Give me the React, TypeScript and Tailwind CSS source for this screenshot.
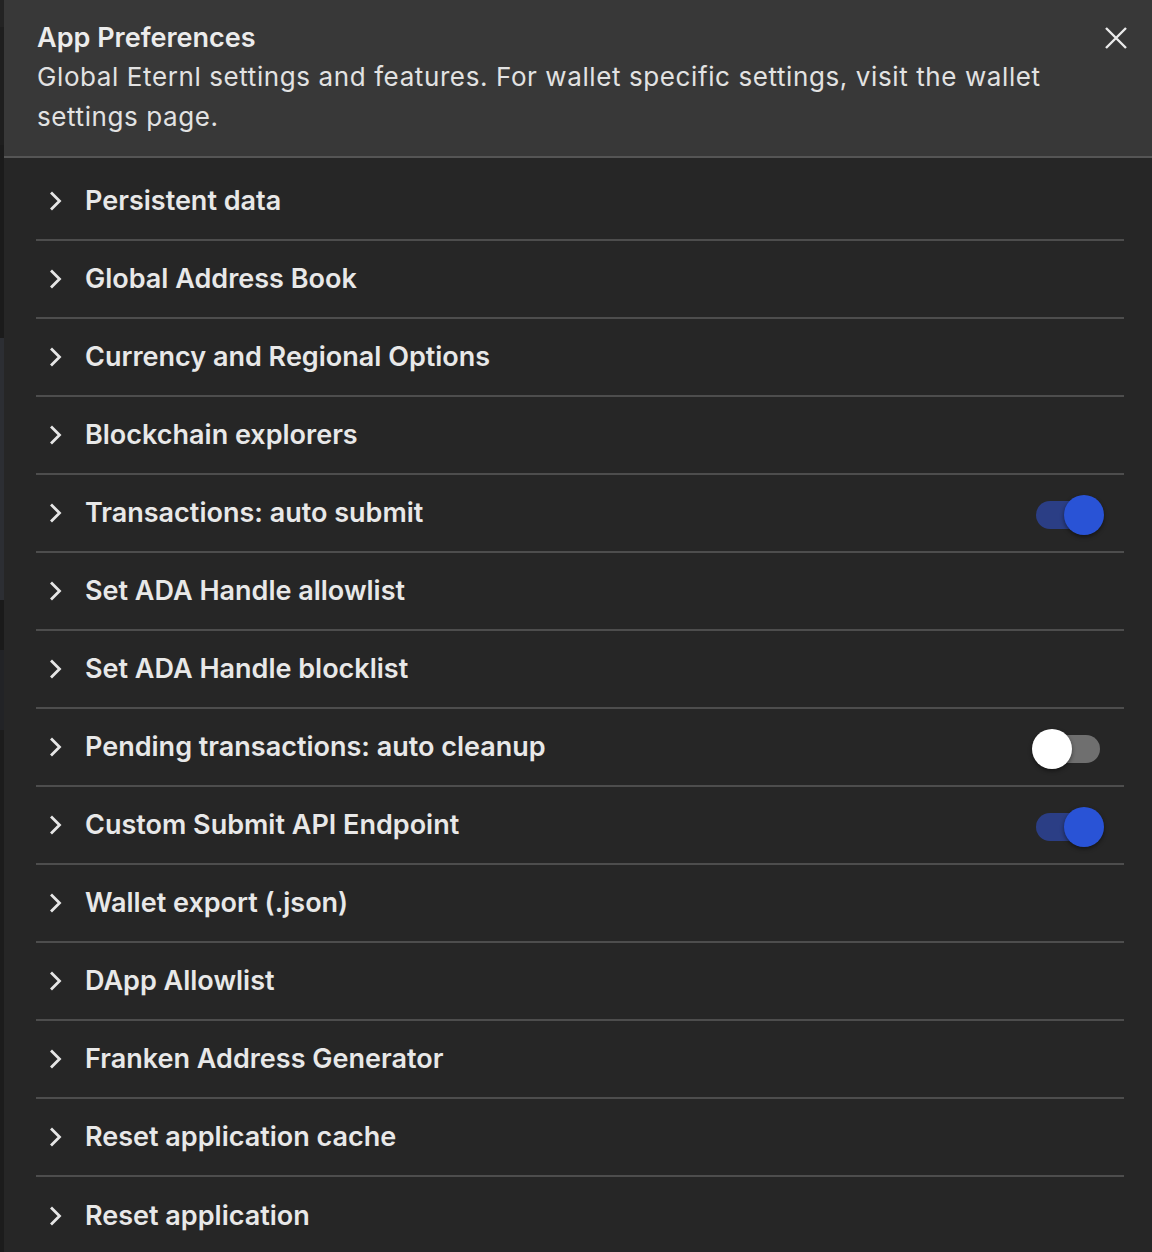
import React from "react";

const rows: { label: string; toggle?: "on" | "off" }[] = [
  { label: "Persistent data" },
  { label: "Global Address Book" },
  { label: "Currency and Regional Options" },
  { label: "Blockchain explorers" },
  { label: "Transactions: auto submit", toggle: "on" },
  { label: "Set ADA Handle allowlist" },
  { label: "Set ADA Handle blocklist" },
  { label: "Pending transactions: auto cleanup", toggle: "off" },
  { label: "Custom Submit API Endpoint", toggle: "on" },
  { label: "Wallet export (.json)" },
  { label: "DApp Allowlist" },
  { label: "Franken Address Generator" },
  { label: "Reset application cache" },
  { label: "Reset application" },
];

function Chevron() {
  return (
    <svg width="14" height="20" viewBox="0 0 14 20" className="shrink-0">
      <path d="M3 2.5 L10.5 10 L3 17.5" fill="none" stroke="#e6e6e6" strokeWidth="2.8" strokeLinecap="square" />
    </svg>
  );
}

function Toggle({ on }: { on: boolean }) {
  return (
    <div className="relative w-[64px] h-[28px] mr-[24px] mt-[3px]">
      <div className={on ? "absolute inset-0 rounded-full bg-[#2b3e85]" : "absolute inset-0 rounded-full bg-[#6f6f6f]"} />
      <div
        className={
          on
            ? "absolute top-[-6px] right-[-4px] w-[40px] h-[40px] rounded-full bg-[#2953d6] shadow-[0_2px_4px_rgba(0,0,0,0.45)]"
            : "absolute top-[-6px] left-[-4px] w-[40px] h-[40px] rounded-full bg-white shadow-[0_2px_4px_rgba(0,0,0,0.45)]"
        }
      />
    </div>
  );
}

export default function App() {
  return (
    <div className="w-[1152px] h-[1252px] overflow-hidden flex bg-[#1c1c1c] font-['Inter',sans-serif]">
      <div className="w-[4px] shrink-0 flex flex-col">
        <div className="h-[27px] bg-[#232323]" />
        <div className="h-[118px] bg-[#1e1e1e]" />
        <div className="h-[193px] bg-[#1b1b1b]" />
        <div className="h-[262px] bg-[#2c2e33]" />
        <div className="h-[50px] bg-[#1a1a1a]" />
        <div className="h-[80px] bg-[#222326]" />
        <div className="flex-1 bg-[#1c1c1c]" />
      </div>
      <div className="flex-1 flex flex-col bg-[#262626]">
        <div className="bg-[#383838] border-b-2 border-[#555555] pl-[33px] pr-[24px] pt-[19px] pb-[19px] flex">
          <div className="flex-1">
            <div className="text-[27px] leading-[38px] font-semibold text-[#ececec]">App Preferences</div>
            <div className="text-[26px] leading-[40px] text-[#e2e2e2] tracking-[0.6px]">
              Global Eternl settings and features. For wallet specific settings, visit the wallet settings page.
            </div>
          </div>
          <div className="pt-[7px] pl-[40px]">
            <svg width="24" height="24" viewBox="0 0 24 24">
              <path d="M2 2 L22 22 M22 2 L2 22" stroke="#ebebeb" strokeWidth="2.4" />
            </svg>
          </div>
        </div>
        <div className="pl-[32px] pr-[28px] pt-[5px]">
          {rows.map((r, i) => (
            <div
              key={r.label}
              className={
                i < rows.length - 1
                  ? "h-[78px] flex items-center border-b-2 border-[#4d4d4d]"
                  : "h-[78px] flex items-center"
              }
            >
              <div className="w-[49px] pl-[13px] flex items-center">
                <Chevron />
              </div>
              <div className="flex-1 text-[27px] font-semibold text-[#e8e8e8]">{r.label}</div>
              {r.toggle && <Toggle on={r.toggle === "on"} />}
            </div>
          ))}
        </div>
      </div>
    </div>
  );
}
